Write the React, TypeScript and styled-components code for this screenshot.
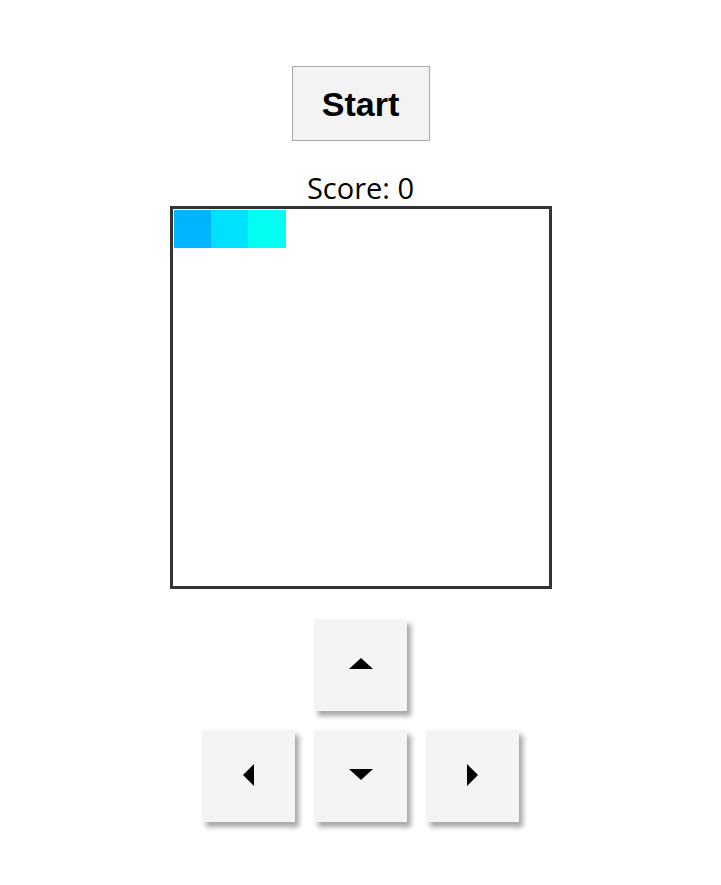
import React from 'react';
import styled, { createGlobalStyle } from 'styled-components';

const GlobalStyle = createGlobalStyle`
  body {
    margin: 0;
    background: #fff;
    font-family: 'Open Sans', 'Noto Sans', sans-serif;
  }
`;

const Page = styled.div`
  display: flex;
  flex-direction: column;
  align-items: center;
  padding: 66px 0 40px;
`;

const StartButton = styled.button`
  width: 138px;
  height: 75px;
  background: #f3f3f3;
  border: 1px solid #a9a9a9;
  font-family: 'Liberation Sans', Arial, sans-serif;
  font-weight: bold;
  font-size: 34px;
  color: #000;
  padding: 2px 0 0;
  cursor: pointer;
`;

const Score = styled.div`
  margin-top: 30px;
  height: 34px;
  line-height: 34px;
  font-size: 29px;
  color: #000;
`;

const CELLS = 10;

const Board = styled.div`
  margin-top: 1px;
  width: 374px;
  height: 375px;
  border: 3px solid #333;
  padding: 1px;
  display: grid;
  grid-template-columns: repeat(${CELLS}, 1fr);
  grid-template-rows: repeat(${CELLS}, 1fr);
`;

const Cell = styled.div<{ $x: number; $y: number; $color: string }>`
  grid-column: ${(p) => p.$x + 1};
  grid-row: ${(p) => p.$y + 1};
  background: ${(p) => p.$color};
`;

const Controls = styled.div`
  margin-top: 30px;
  display: grid;
  grid-template-columns: repeat(3, 93px);
  grid-template-rows: repeat(2, 92px);
  column-gap: 19px;
  row-gap: 19px;
`;

const Key = styled.button<{ $col: number; $row: number }>`
  grid-column: ${(p) => p.$col};
  grid-row: ${(p) => p.$row};
  background: #f4f4f4;
  border: none;
  box-shadow: 4px 5px 5px rgba(0, 0, 0, 0.35);
  display: flex;
  align-items: center;
  justify-content: center;
  padding: 0;
  cursor: pointer;
`;

type Dir = 'up' | 'down' | 'left' | 'right';

const Arrow = styled.span<{ $dir: Dir }>`
  width: 0;
  height: 0;
  margin-top: -3px;
  border-style: solid;
  border-color: transparent;
  ${(p) =>
    p.$dir === 'up'
      ? 'border-width: 0 12px 11px 12px; border-bottom-color: #000;'
      : p.$dir === 'down'
      ? 'border-width: 11px 12px 0 12px; border-top-color: #000;'
      : p.$dir === 'left'
      ? 'border-width: 11px 11px 11px 0; border-right-color: #000;'
      : 'border-width: 11px 0 11px 11px; border-left-color: #000;'}
`;

const snake = [
  { x: 0, y: 0, color: '#00b4ff' },
  { x: 1, y: 0, color: '#00e1ff' },
  { x: 2, y: 0, color: '#00fff0' },
];

const keys: { dir: Dir; col: number; row: number }[] = [
  { dir: 'up', col: 2, row: 1 },
  { dir: 'left', col: 1, row: 2 },
  { dir: 'down', col: 2, row: 2 },
  { dir: 'right', col: 3, row: 2 },
];

export default function App() {
  const [score] = React.useState(0);
  return (
    <>
      <GlobalStyle />
      <Page>
        <StartButton>Start</StartButton>
        <Score>Score: {score}</Score>
        <Board>
          {snake.map((s, i) => (
            <Cell key={i} $x={s.x} $y={s.y} $color={s.color} />
          ))}
        </Board>
        <Controls>
          {keys.map((k) => (
            <Key key={k.dir} $col={k.col} $row={k.row}>
              <Arrow $dir={k.dir} />
            </Key>
          ))}
        </Controls>
      </Page>
    </>
  );
}
